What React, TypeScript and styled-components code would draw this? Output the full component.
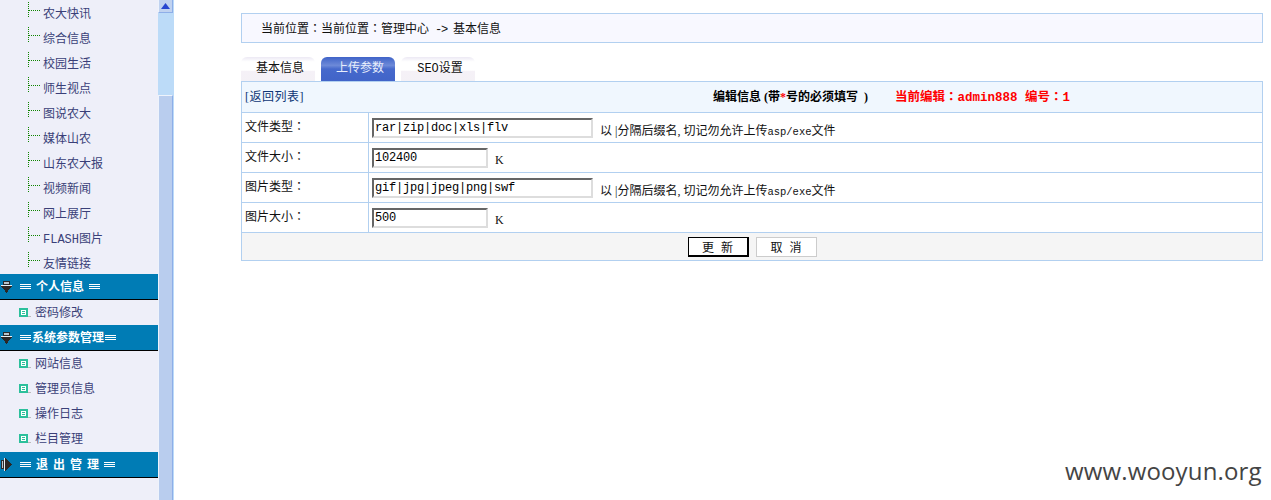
import styled, { createGlobalStyle } from "styled-components";

const GlobalStyle = createGlobalStyle`
  html, body {
    margin: 0;
    height: 500px;
    overflow: hidden;
    background: #fff;
    font-family: "Liberation Serif", "Noto Sans CJK SC", serif;
    font-size: 12px;
  }
`;

const Page = styled.div`
  display: flex;
  height: 500px;
`;

// left menu
const Sidebar = styled.div`
  width: 158px;
  height: 500px;
  background: #eeeff9;
  overflow: hidden;
  flex-shrink: 0;
`;
const TreeList = styled.div`
  margin-top: -1px;
`;
const TreeRow = styled.div`
  display: flex;
  align-items: center;
  height: 25px;
  padding-left: 28px;
  color: #3a3f78;
  font-family: "Liberation Mono", "Noto Sans CJK SC", monospace;
`;
const TreeLabel = styled.span`
  margin-left: 3px;
  padding-top: 3px;
`;
const MenuBar = styled.div`
  display: flex;
  align-items: center;
  height: 25px;
  background: #007cb5;
  border-bottom: 1px solid #000;
  color: #fff;
  font-weight: bold;
`;
const BarArrow = styled.svg`
  width: 14px;
  height: 15px;
  margin: 0 5px 0 1px;
  flex-shrink: 0;
`;
const BarLines = styled.span`
  display: block;
  width: 11px;
  height: 5px;
  background: repeating-linear-gradient(#fff 0 1px, transparent 1px 2px);
  flex-shrink: 0;
`;
const BarTitle = styled.span<{ $side: number; $spacing?: number }>`
  margin: 0 ${({ $side, $spacing }) => $side - ($spacing || 0)}px 0 ${({ $side }) => $side}px;
  padding-bottom: 2px;
  letter-spacing: ${({ $spacing }) => $spacing || 0}px;
  white-space: nowrap;
`;
const SubList = styled.div`
  padding-bottom: 1px;
`;
const SubRow = styled.div`
  display: flex;
  align-items: center;
  height: 25px;
  padding-left: 19px;
  color: #3a3f78;
`;
const SubLabel = styled.span`
  padding-bottom: 2px;
`;
const BulletIcon = styled.svg`
  width: 12px;
  height: 9px;
  margin-right: 4px;
  flex-shrink: 0;
`;

// fake scrollbar
const Scrollbar = styled.div`
  display: flex;
  flex-direction: column;
  width: 16px;
  height: 500px;
  background: #bcdbf8;
  flex-shrink: 0;
`;
const ScrollButton = styled.div`
  display: flex;
  align-items: center;
  justify-content: center;
  box-sizing: border-box;
  height: 13px;
  width: 15px;
  background: #c0d2f0;
  border: 1px solid #8eaee8;
  border-top: 0;
  border-left-color: #eef3fc;
`;
const ScrollTrack = styled.div`
  height: 82px;
`;
const ScrollThumb = styled.div`
  flex: 1;
  box-sizing: border-box;
  width: 15px;
  background: #b9cdee;
  border: 1px solid #8eaee8;
  border-top-color: #eef3fc;
  border-left-color: #eef3fc;
  border-bottom: 0;
`;

// right content
const Main = styled.div`
  flex: 1;
  padding: 13px 8px 0 67px;
`;
const Breadcrumb = styled.div`
  box-sizing: border-box;
  height: 30px;
  line-height: 28px;
  padding-left: 19px;
  background: #f8f8ff;
  border: 1px solid #b2d0f0;
  color: #111;
  font-family: "Liberation Mono", "Noto Sans CJK SC", monospace;
`;
const CrumbArrow = styled.span`
  letter-spacing: -1.2px;
`;
const Colon = styled.span`
  font-family: "Noto Sans CJK TC", sans-serif;
`;
const Tabs = styled.div`
  display: flex;
  gap: 6px;
  margin-top: 14px;
`;
const Tab = styled.div<{ $active?: boolean }>`
  box-sizing: border-box;
  width: 74px;
  height: 24px;
  padding-left: 4px;
  line-height: 25px;
  text-align: center;
  border-radius: 6px 6px 0 0;
  font-family: "Liberation Mono", "Noto Sans CJK SC", monospace;
  color: ${({ $active }) => ($active ? "#e8eefc" : "#111")};
  background: ${({ $active }) =>
    $active
      ? "linear-gradient(#3f63c8, #6d8ad8 35%, #4669cc 50%, #4164c8)"
      : "linear-gradient(#ece9f4, #fff 20%, #fff 55%, #f5f1f7 60%, #f4f1f6)"};
`;
const FormTable = styled.table`
  width: 1022px;
  border-collapse: collapse;
  table-layout: fixed;
  color: #111;
`;
const HeadCell = styled.td`
  box-sizing: border-box;
  height: 31px;
  padding: 0 3px 3px;
  background: #f0f7fe;
  border: 1px solid #b2d0f0;
`;
const HeadInner = styled.div`
  display: flex;
  align-items: center;
`;
const BackLink = styled.a`
  width: 468px;
  color: #0d3575;
  letter-spacing: 0.5px;
`;
const HeadTitle = styled.b`
  color: #000;
  white-space: nowrap;
`;
const RedText = styled.span`
  color: #f00;
`;
const RedInfo = styled(RedText)`
  margin-left: 27px;
  font-family: "Liberation Mono", "Noto Sans CJK SC", monospace;
  font-size: 12.5px;
  font-weight: bold;
  white-space: nowrap;
`;
const LabelCell = styled.td`
  box-sizing: border-box;
  height: 30px;
  padding: 0 3px 3px;
  border: 1px solid #b2d0f0;
`;
const ValueCell = styled.td`
  box-sizing: border-box;
  height: 30px;
  padding: 0 3px;
  border: 1px solid #b2d0f0;
`;
const ValueInner = styled.div`
  display: flex;
  align-items: center;
`;
const TextInput = styled.input<{ $width: number }>`
  box-sizing: border-box;
  width: ${({ $width }) => $width}px;
  height: 20px;
  padding: 0 1px;
  margin: 0;
  border: 2px solid;
  border-color: #666 #ddd #ddd #666;
  outline: 0;
  color: #000;
  font-family: "Liberation Mono", monospace;
  font-size: 12px;
  letter-spacing: -0.2px;
`;
const Hint = styled.span`
  margin: 5px 0 0 7px;
  white-space: nowrap;
`;
const HintLatin = styled.span`
  font-family: "Liberation Mono", monospace;
  font-size: 10.5px;
`;
const FootCell = styled.td`
  box-sizing: border-box;
  height: 28px;
  padding: 0;
  background: #f5f5f5;
  border: 1px solid #b2d0f0;
`;
const FootInner = styled.div`
  display: flex;
  justify-content: center;
  gap: 7px;
`;
const FormButton = styled.button<{ $primary?: boolean }>`
  box-sizing: border-box;
  width: 61px;
  height: 20px;
  padding: 0 0 0 2px;
  background: #fff;
  color: #111;
  border: 1px solid #ccc;
  border-color: ${({ $primary }) => ($primary ? "#000" : "#ccc")};
  border-width: ${({ $primary }) => ($primary ? "1px 2px 2px 1px" : "1px")};
  font: inherit;
  letter-spacing: 2px;
`;

const Watermark = styled.div`
  position: absolute;
  left: 1065px;
  top: 455px;
  color: #444;
  font-family: "Open Sans", sans-serif;
  font-size: 24px;
  letter-spacing: 0.15px;
  line-height: 32px;
  white-space: nowrap;
`;

const TreeMark = () => (
  <svg width="12" height="25" style={{ flexShrink: 0 }} shapeRendering="crispEdges">
    <path d="M.5 3V18M1 11.5H12" stroke="#0f8500" strokeDasharray="1 1" fill="none" />
  </svg>
);

const Bullet = () => (
  <BulletIcon viewBox="0 0 12 9">
    <path d="M9 8.5H12" stroke="#bbb" fill="none" shapeRendering="crispEdges" />
    <rect width="9" height="9" fill="#2cc09c" />
    <path d="M2.5 2.5H6.5V6.5H2.5ZM2.5 4.5H6.5" stroke="#fff" fill="none" shapeRendering="crispEdges" />
  </BulletIcon>
);

const ArrowDown = () => (
  <BarArrow viewBox="0 0 14 15" shapeRendering="crispEdges">
    <path d="M2.5 2.5H8.5V5.5H2.5Z" fill="#b8c4cc" stroke="#2b2b2b" />
    <path d="M0 6.5H11" stroke="#e8eef2" />
    <path d="M0 7H11L5.5 14Z" fill="#2b2725" />
  </BarArrow>
);

const ArrowRight = () => (
  <BarArrow viewBox="0 0 14 15" shapeRendering="crispEdges">
    <path d="M.5 3.5H2.5V11.5H.5Z" fill="#b8c4cc" stroke="#2b2b2b" />
    <path d="M3.5 1V14" stroke="#e8eef2" />
    <path d="M4 1L11 7.5L4 14Z" fill="#2b2725" />
  </BarArrow>
);

const treeItems = ["农大快讯", "综合信息", "校园生活", "师生视点", "图说农大", "媒体山农", "山东农大报", "视频新闻", "网上展厅", "FLASH图片", "友情链接"];
const sysItems = ["网站信息", "管理员信息", "操作日志", "栏目管理"];

const HintText = () => (
  <Hint>
    以 |分隔后缀名, 切记勿允许上传<HintLatin>asp/exe</HintLatin>文件
  </Hint>
);

export default function App() {
  return (
    <>
      <GlobalStyle />
      <Page>
        <Sidebar>
          <TreeList>
            {treeItems.map((t) => (
              <TreeRow key={t}>
                <TreeMark />
                <TreeLabel>{t}</TreeLabel>
              </TreeRow>
            ))}
          </TreeList>
          <MenuBar>
            <ArrowDown />
            <BarLines />
            <BarTitle $side={5}>个人信息</BarTitle>
            <BarLines />
          </MenuBar>
          <SubRow>
            <Bullet />
            <SubLabel>密码修改</SubLabel>
          </SubRow>
          <MenuBar>
            <ArrowDown />
            <BarLines />
            <BarTitle $side={1}>系统参数管理</BarTitle>
            <BarLines />
          </MenuBar>
          <SubList>
            {sysItems.map((t) => (
              <SubRow key={t}>
                <Bullet />
                <SubLabel>{t}</SubLabel>
              </SubRow>
            ))}
          </SubList>
          <MenuBar>
            <ArrowRight />
            <BarLines />
            <BarTitle $side={5} $spacing={5}>退出管理</BarTitle>
            <BarLines />
          </MenuBar>
        </Sidebar>
        <Scrollbar>
          <ScrollButton>
            <svg width="9" height="6" viewBox="0 0 9 6">
              <path d="M4.5 0L9 6H0Z" fill="#2746d0" />
            </svg>
          </ScrollButton>
          <ScrollTrack />
          <ScrollThumb />
        </Scrollbar>
        <Main>
          <Breadcrumb>
            当前位置<Colon>：</Colon>当前位置<Colon>：</Colon>管理中心<CrumbArrow> -&gt; </CrumbArrow>基本信息
          </Breadcrumb>
          <Tabs>
            <Tab>基本信息</Tab>
            <Tab $active>上传参数</Tab>
            <Tab>SEO设置</Tab>
          </Tabs>
          <FormTable>
            <colgroup>
              <col width="127" />
              <col />
            </colgroup>
            <tbody>
              <tr>
                <HeadCell colSpan={2}>
                  <HeadInner>
                    <BackLink>[返回列表]</BackLink>
                    <HeadTitle>
                      编辑信息 (带<RedText>*</RedText>号的必须填写 &nbsp;)
                    </HeadTitle>
                    <RedInfo>当前编辑<Colon>：</Colon>admin888 编号<Colon>：</Colon>1</RedInfo>
                  </HeadInner>
                </HeadCell>
              </tr>
              <tr>
                <LabelCell>文件类型<Colon>：</Colon></LabelCell>
                <ValueCell>
                  <ValueInner>
                    <TextInput $width={221} value="rar|zip|doc|xls|flv" readOnly />
                    <HintText />
                  </ValueInner>
                </ValueCell>
              </tr>
              <tr>
                <LabelCell>文件大小<Colon>：</Colon></LabelCell>
                <ValueCell>
                  <ValueInner>
                    <TextInput $width={116} value="102400" readOnly />
                    <Hint>K</Hint>
                  </ValueInner>
                </ValueCell>
              </tr>
              <tr>
                <LabelCell>图片类型<Colon>：</Colon></LabelCell>
                <ValueCell>
                  <ValueInner>
                    <TextInput $width={221} value="gif|jpg|jpeg|png|swf" readOnly />
                    <HintText />
                  </ValueInner>
                </ValueCell>
              </tr>
              <tr>
                <LabelCell>图片大小<Colon>：</Colon></LabelCell>
                <ValueCell>
                  <ValueInner>
                    <TextInput $width={116} value="500" readOnly />
                    <Hint>K</Hint>
                  </ValueInner>
                </ValueCell>
              </tr>
              <tr>
                <FootCell colSpan={2}>
                  <FootInner>
                    <FormButton $primary>更 新</FormButton>
                    <FormButton>取 消</FormButton>
                  </FootInner>
                </FootCell>
              </tr>
            </tbody>
          </FormTable>
        </Main>
      </Page>
      <Watermark>www.wooyun.org</Watermark>
    </>
  );
}
